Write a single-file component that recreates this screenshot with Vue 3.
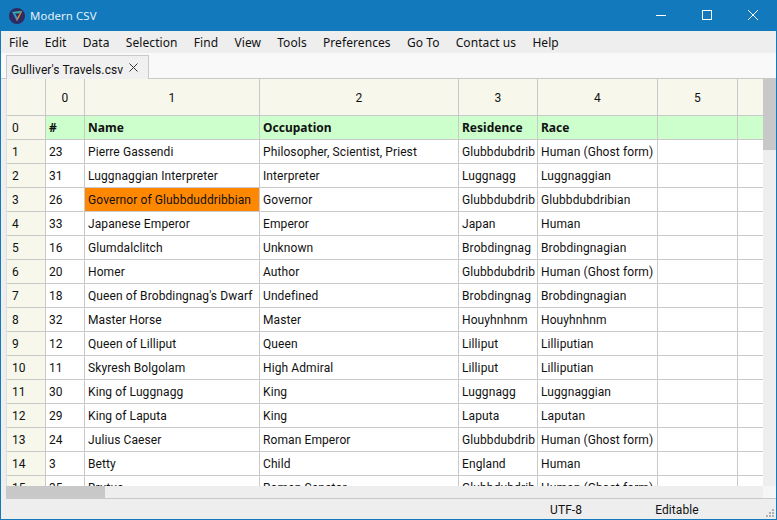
<script setup>
const menus = ['File', 'Edit', 'Data', 'Selection', 'Find', 'View', 'Tools', 'Preferences', 'Go To', 'Contact us', 'Help']
const rows = [
  ['23', 'Pierre Gassendi', 'Philosopher, Scientist, Priest', 'Glubbdubdrib', 'Human (Ghost form)'],
  ['31', 'Luggnaggian Interpreter', 'Interpreter', 'Luggnagg', 'Luggnaggian'],
  ['26', 'Governor of Glubbduddribbian', 'Governor', 'Glubbdubdrib', 'Glubbdubdribian'],
  ['33', 'Japanese Emperor', 'Emperor', 'Japan', 'Human'],
  ['16', 'Glumdalclitch', 'Unknown', 'Brobdingnag', 'Brobdingnagian'],
  ['20', 'Homer', 'Author', 'Glubbdubdrib', 'Human (Ghost form)'],
  ['18', "Queen of Brobdingnag's Dwarf", 'Undefined', 'Brobdingnag', 'Brobdingnagian'],
  ['32', 'Master Horse', 'Master', 'Houyhnhnm', 'Houyhnhnm'],
  ['12', 'Queen of Lilliput', 'Queen', 'Lilliput', 'Lilliputian'],
  ['11', 'Skyresh Bolgolam', 'High Admiral', 'Lilliput', 'Lilliputian'],
  ['30', 'King of Luggnagg', 'King', 'Luggnagg', 'Luggnaggian'],
  ['29', 'King of Laputa', 'King', 'Laputa', 'Laputan'],
  ['24', 'Julius Caeser', 'Roman Emperor', 'Glubbdubdrib', 'Human (Ghost form)'],
  ['3', 'Betty', 'Child', 'England', 'Human'],
  ['35', 'Brutus', 'Roman Senator', 'Glubbdubdrib', 'Human (Ghost form)'],
]
</script>

<template>
  <div class="window">
    <header class="titlebar">
      <svg class="logo" viewBox="0 0 18 18" width="18" height="18">
        <circle cx="9" cy="9" r="8" fill="#2e2a62" />
        <path d="M3.5 5 L14.5 3.8 L12 6.2 L6 6.4 Z" fill="#35b3a8" />
        <path d="M4.5 5.5 L9 14.5 L9.3 10.5 L6.5 5.5 Z" fill="#2f9fd0" />
        <path d="M14.5 3.8 L9 14.5 L9.3 10.5 L12 6.2 Z" fill="#f0882a" />
      </svg>
      <span class="title">Modern CSV</span>
      <div class="controls">
        <svg width="12" height="12" viewBox="0 0 12 12"><path d="M1 6.5H11" stroke="#fff" /></svg>
        <svg width="12" height="12" viewBox="0 0 12 12"><rect x="1.5" y="1.5" width="9" height="9" fill="none" stroke="#fff" /></svg>
        <svg width="12" height="12" viewBox="0 0 12 12"><path d="M1 1L11 11M11 1L1 11" stroke="#fff" /></svg>
      </div>
    </header>
    <nav class="menubar">
      <span v-for="m in menus" :key="m">{{ m }}</span>
    </nav>
    <div class="tabstrip">
      <div class="tab">
        <span class="tabname">Gulliver's Travels.csv</span>
        <svg width="9" height="9" viewBox="0 0 9 9"><path d="M.5 .5L8.5 8.5M8.5 .5L.5 8.5" stroke="#333" /></svg>
      </div>
    </div>
    <div class="sheet">
      <div class="grid-row head">
        <div class="cell corner"></div>
        <div v-for="n in 7" :key="n" class="cell colhead">{{ n < 7 ? n - 1 : '' }}</div>
      </div>
      <div class="grid-row first">
        <div class="cell rowhead">0</div>
        <div class="cell bold">#</div>
        <div class="cell bold">Name</div>
        <div class="cell bold">Occupation</div>
        <div class="cell bold">Residence</div>
        <div class="cell bold">Race</div>
        <div class="cell"></div>
        <div class="cell"></div>
      </div>
      <div v-for="(r, i) in rows" :key="i" class="grid-row">
        <div class="cell rowhead">{{ i + 1 }}</div>
        <div v-for="(c, j) in r" :key="j" class="cell" :class="{ hit: i === 2 && j === 1 }">{{ c }}</div>
        <div class="cell"></div>
        <div class="cell"></div>
      </div>
      <div class="vscroll"><div class="vthumb"></div></div>
      <div class="hscroll"><div class="hthumb"></div><div class="hcorner"></div></div>
    </div>
    <footer class="status">
      <span class="enc">UTF-8</span>
      <span class="mode">Editable</span>
      <svg class="grip" width="10" height="10" viewBox="0 0 10 10" fill="#b0b0b0">
        <rect x="7" y="1" width="2" height="2" /><rect x="4" y="4" width="2" height="2" /><rect x="7" y="4" width="2" height="2" />
        <rect x="1" y="7" width="2" height="2" /><rect x="4" y="7" width="2" height="2" /><rect x="7" y="7" width="2" height="2" />
      </svg>
    </footer>
  </div>
</template>

<style>
html, body { margin: 0; padding: 0; }
</style>

<style scoped>
.window {
  width: 777px;
  height: 520px;
  box-sizing: border-box;
  border: 1px solid #1279bd;
  border-top: 0;
  display: flex;
  flex-direction: column;
  background: #eeeeee;
  font-family: Roboto, sans-serif;
  font-size: 12px;
  letter-spacing: 0.1px;
  color: #111;
  overflow: hidden;
}
.titlebar {
  height: 31px;
  flex: none;
  background: #1279bd;
  display: flex;
  align-items: center;
  padding-left: 8px;
  color: #e4f1f9;
  margin: 0 -1px;
}
.logo { flex: none; }
.title { margin-left: 4px; font: 11.4px "Noto Sans", sans-serif; }
.controls {
  margin-left: auto;
  display: flex;
  align-items: center;
  gap: 34px;
  padding-right: 18px;
  transform: translateY(-1px);
}
.menubar {
  height: 22px;
  flex: none;
  display: flex;
  align-items: center;
  padding-left: 8px;
  gap: 16.2px;
  font-family: "Noto Sans", sans-serif;
  letter-spacing: 0.08px;
}
.tabstrip {
  height: 26px;
  flex: none;
  background: #f9f9f9;
  display: flex;
  align-items: flex-end;
  padding-left: 5px;
  border-bottom: 1px solid #c9c9c9;
  box-sizing: border-box;
}
.tab {
  width: 143px;
  height: 24px;
  box-sizing: border-box;
  margin-bottom: -1px;
  background: #f0f0f0;
  border: 1px solid #c9c9c9;
  border-bottom: 0;
  display: flex;
  align-items: center;
  padding-left: 4px;
  gap: 6px;
}
.tabname { padding-top: 4px; }
.sheet {
  position: relative;
  flex: 1;
  min-height: 0;
  margin-left: 5px;
  overflow: hidden;
  background: #dedede;
  border-bottom: 1px solid #c9c9c9;
}
.grid-row {
  display: grid;
  grid-template-columns: 39px 39px 175px 199px 79px 120px 80px 26px;
  height: 24px;
  width: max-content;
  margin-left: 1px;
  background: #fff;
}
.head { height: 37px; }
.cell {
  box-sizing: border-box;
  border-right: 1px solid #c9c9c9;
  border-bottom: 1px solid #c9c9c9;
  padding-left: 3px;
  white-space: nowrap;
  overflow: hidden;
  line-height: 25px;
}
.corner, .colhead, .rowhead { background: #f7f7ec; }
.colhead { text-align: center; padding-left: 0; line-height: 38px; }
.rowhead { padding-left: 5px; }
.first .cell:not(.rowhead) { background: #ccffcc; }
.bold { font-family: "Noto Sans", sans-serif; font-weight: 700; letter-spacing: 0; line-height: 23px; }
.hit { background: #ff8800; }
.vscroll {
  position: absolute;
  top: 0;
  right: 0;
  width: 13px;
  bottom: 12px;
  background: #eeeeee;
}
.vthumb { height: 71px; background: #c8c8c8; }
.hscroll {
  position: absolute;
  left: 0;
  right: 0;
  bottom: 0;
  height: 12px;
  background: #eeeeee;
}
.hthumb { width: 99px; height: 12px; background: #c8c8c8; }
.hcorner { position: absolute; right: 0; top: 0; width: 13px; height: 12px; background: #f6f6f6; }
.status {
  height: 20px;
  box-sizing: border-box;
  padding-top: 2px;
  flex: none;
  position: relative;
  display: flex;
  align-items: center;
}
.enc { margin-left: 549px; }
.mode { margin-left: 73px; }
.grip { position: absolute; right: 1px; bottom: 1px; }
</style>
